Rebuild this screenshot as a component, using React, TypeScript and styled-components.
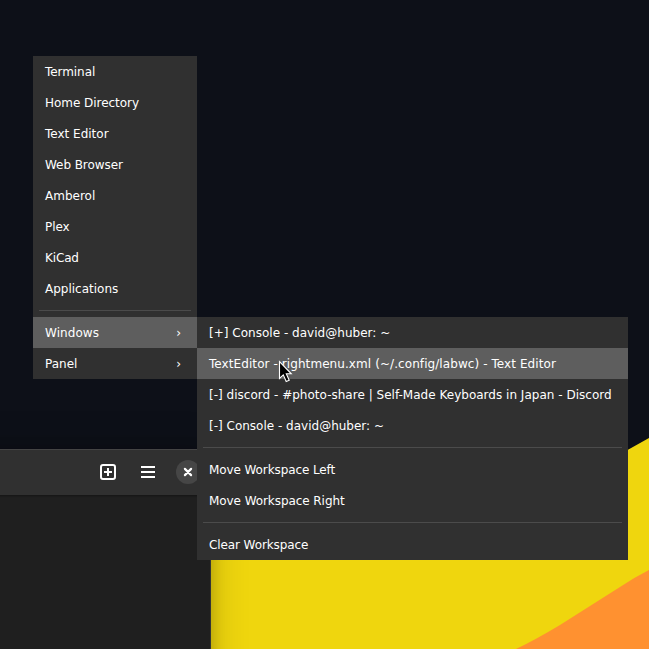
import React from "react";
import styled, { createGlobalStyle } from "styled-components";

const GlobalStyle = createGlobalStyle`
  body { margin: 0; overflow: hidden; background: #0d1018; }
`;

const Desktop = styled.main`
  position: relative;
  width: 649px;
  height: 649px;
  overflow: hidden;
  background: #0d1018;
  color: #fff;
  font: 12px "DejaVu Sans", sans-serif;
  cursor: default;
`;

const Wallpaper = styled.svg`
  position: absolute;
  inset: 0;
`;

const AppWindow = styled.section`
  position: absolute;
  left: -400px;
  top: 449px;
  width: 611px;
  height: 240px;
  box-sizing: border-box;
  background: #1f1f1f;
  border-right: 1px solid #343434;
  box-shadow: 0 0 34px 5px rgba(0, 0, 0, 0.14), 0 2px 12px 2px rgba(0, 0, 0, 0.16);
`;

const HeaderBar = styled.header`
  display: flex;
  justify-content: flex-end;
  align-items: center;
  gap: 16px;
  height: 46px;
  padding: 0 10px 1px 0;
  box-sizing: border-box;
  background: #303030;
  border-top: 1px solid #444;
  box-shadow: 0 1px 2px rgba(0, 0, 0, 0.35);
`;

const IconButton = styled.button<{ $round?: boolean }>`
  display: grid;
  place-items: center;
  width: 24px;
  height: 24px;
  padding: 0;
  border: 0;
  border-radius: 50%;
  background: ${(p) => (p.$round ? "#464646" : "transparent")};
  color: #fff;

  svg { display: block; }
`;

const Menu = styled.nav<{ $x: number; $y: number; $width: number }>`
  position: absolute;
  left: ${(p) => p.$x}px;
  top: ${(p) => p.$y}px;
  width: ${(p) => p.$width}px;
  background: #303030;
`;

const MenuItem = styled.div<{ $active?: boolean }>`
  display: flex;
  align-items: center;
  justify-content: space-between;
  height: 31px;
  padding: 2px 16px 0 12px;
  box-sizing: border-box;
  line-height: 29px;
  white-space: pre;
  background: ${(p) => (p.$active ? "#5e5e5e" : "transparent")};
`;

const Label = styled.span<{ $tracking?: number }>`
  letter-spacing: ${(p) => p.$tracking ?? 0}px;
`;

const Separator = styled.hr`
  height: 1px;
  margin: 6px;
  border: 0;
  background: #4b4b4b;
`;

const Pointer = styled.svg`
  position: absolute;
  left: 277px;
  top: 359px;
`;

type Entry = { label: string; active?: boolean; submenu?: boolean; tracking?: number } | null;

const rootEntries: Entry[] = [
  { label: "Terminal", tracking: -0.06 },
  { label: "Home Directory", tracking: -0.04 },
  { label: "Text Editor" },
  { label: "Web Browser", tracking: -0.07 },
  { label: "Amberol" },
  { label: "Plex", tracking: -0.08 },
  { label: "KiCad", tracking: -0.15 },
  { label: "Applications" },
  null,
  { label: "Windows", active: true, submenu: true, tracking: 0.07 },
  { label: "Panel", submenu: true },
];

const windowEntries: Entry[] = [
  { label: "[+] Console - david@huber: ~", tracking: 0.02 },
  {
    label: "TextEditor - rightmenu.xml (~/.config/labwc) - Text Editor",
    active: true,
    tracking: 0.08,
  },
  {
    label: "[-] discord - #photo-share | Self-Made Keyboards in Japan - Discord",
    tracking: 0.015,
  },
  { label: "[-] Console - david@huber: ~" },
  null,
  { label: "Move Workspace Left", tracking: -0.1 },
  { label: "Move Workspace Right", tracking: -0.07 },
  null,
  { label: "Clear Workspace", tracking: -0.1 },
];

function Entries({ items }: { items: Entry[] }) {
  return (
    <>
      {items.map((item, i) =>
        item ? (
          <MenuItem key={i} $active={item.active}>
            <Label $tracking={item.tracking}>{item.label}</Label>
            {item.submenu && <Label>›</Label>}
          </MenuItem>
        ) : (
          <Separator key={i} />
        )
      )}
    </>
  );
}

export default function App() {
  return (
    <>
      <GlobalStyle />
      <Desktop>
        <Wallpaper width="649" height="649" viewBox="0 0 649 649">
          <path d="M649 438 L628 449.7 Q420 570 200 553 V649 H649Z" fill="#efd60e" />
          <path d="M649 570 Q635 577 620 587 L560 625 Q535 640 516 649 H649Z" fill="#ff9130" />
        </Wallpaper>
        <AppWindow>
          <HeaderBar>
            <IconButton aria-label="New tab">
              <svg width="16" height="16" viewBox="0 0 16 16" fill="none" stroke="currentColor" strokeWidth="2">
                <rect x="1" y="1" width="14" height="14" rx="2" />
                <path d="M8 4v8M4 8h8" />
              </svg>
            </IconButton>
            <IconButton aria-label="Main menu">
              <svg width="14" height="12" viewBox="0 0 14 12" fill="currentColor">
                <path d="M0 0h14v2H0zM0 5h14v2H0zM0 10h14v2H0z" />
              </svg>
            </IconButton>
            <IconButton $round aria-label="Close">
              <svg width="10" height="10" viewBox="0 0 10 10" fill="none" stroke="currentColor" strokeWidth="2.2" strokeLinecap="round">
                <path d="M1.9 1.9l6.2 6.2M8.1 1.9l-6.2 6.2" />
              </svg>
            </IconButton>
          </HeaderBar>
        </AppWindow>
        <Menu $x={33} $y={56} $width={164}>
          <Entries items={rootEntries} />
        </Menu>
        <Menu $x={197} $y={317} $width={431}>
          <Entries items={windowEntries} />
        </Menu>
        <Pointer width="18" height="26" viewBox="0 0 18 26">
          <path
            d="M2.5 2.5v17l3.8-3.6 2.9 6.6 3-1.3-2.9-6.4h5z"
            fill="#000"
            stroke="#fff"
            strokeWidth="1.1"
          />
        </Pointer>
      </Desktop>
    </>
  );
}
